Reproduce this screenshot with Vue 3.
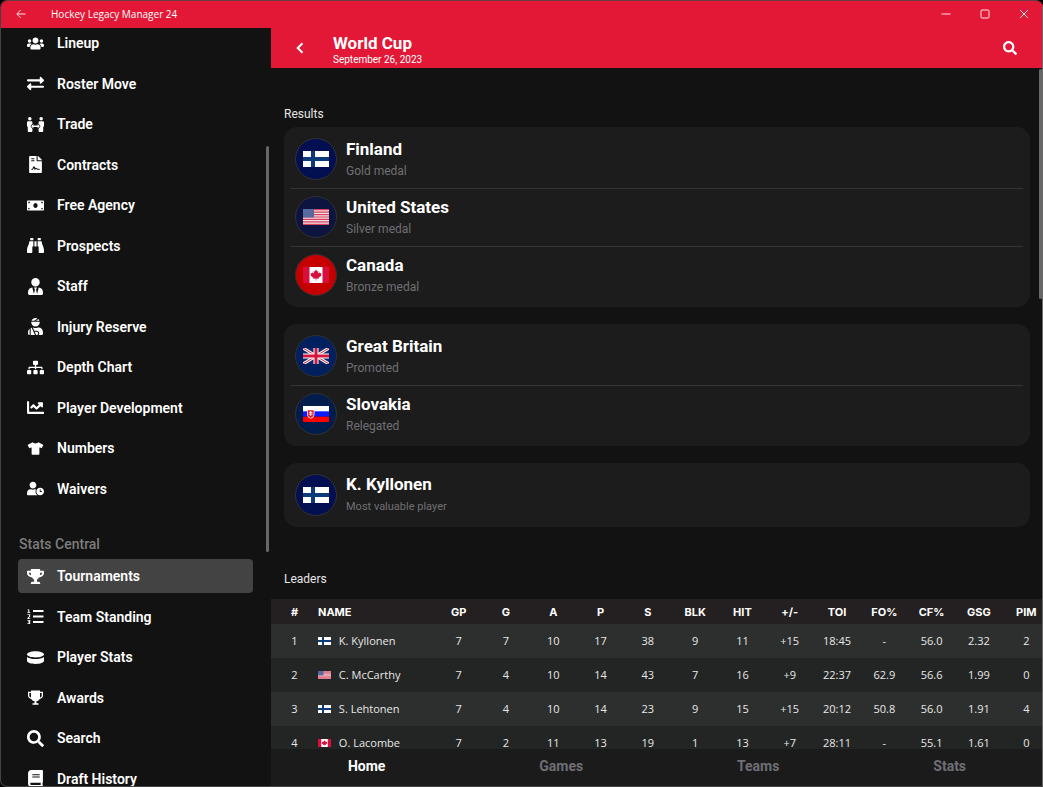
<script setup>
import { ref } from 'vue'

const icons = {
  lineup: {
    box: '0 0 640 512',
    path: 'M96 224c35.3 0 64-28.7 64-64s-28.7-64-64-64-64 28.7-64 64 28.7 64 64 64zm448 0c35.3 0 64-28.7 64-64s-28.7-64-64-64-64 28.7-64 64 28.7 64 64 64zm32 32h-64c-17.6 0-33.5 7.1-45.1 18.6 40.3 22.1 68.9 62 75.1 109.4h66c17.7 0 32-14.3 32-32v-32c0-35.3-28.7-64-64-64zm-256 0c61.9 0 112-50.1 112-112S381.9 32 320 32 208 82.1 208 144s50.1 112 112 112zm76.8 32h-8.3c-20.8 10-43.9 16-68.5 16s-47.6-6-68.5-16h-8.3C179.6 288 128 339.6 128 403.2V432c0 26.5 21.5 48 48 48h288c26.5 0 48-21.5 48-48v-28.8c0-63.6-51.6-115.2-115.2-115.2zm-223.7-13.4C161.5 263.1 145.6 256 128 256H64c-35.3 0-64 28.7-64 64v32c0 17.7 14.3 32 32 32h65.9c6.3-47.4 34.9-87.3 75.2-109.4z'
  },
  roster: {
    box: '0 0 512 512',
    path: 'M0 168v-16c0-13.255 10.745-24 24-24h360V80c0-21.367 25.899-32.042 40.971-16.971l80 80c9.372 9.373 9.372 24.569 0 33.941l-80 80C409.956 271.982 384 261.456 384 240v-48H24c-13.255 0-24-10.745-24-24zm488 152H128v-48c0-21.314-25.862-32.08-40.971-16.971l-80 80c-9.372 9.373-9.372 24.569 0 33.941l80 80C102.057 463.997 128 453.437 128 432v-48h360c13.255 0 24-10.745 24-24v-16c0-13.255-10.745-24-24-24z'
  },
  trade: {
    box: '0 0 576 512',
    path: 'M96 0a60 60 0 1 1 0 120a60 60 0 1 1 0-120zM480 0a60 60 0 1 1 0 120a60 60 0 1 1 0-120zM44 144h96c26 0 44 18 44 44v42l-52 58c-14 16-14 38 0 54l52 56v74c0 22-18 40-40 40H66c-22 0-40-18-40-40V344C10 336 0 320 0 302V188c0-26 18-44 44-44zM436 144h96c26 0 44 18 44 44v114c0 18-10 34-26 42v128c0 22-18 40-40 40h-78c-22 0-40-18-40-40v-74l52-56c14-16 14-38 0-54l-52-58v-42c0-26 18-44 44-44zM216 240v48h144v-48l76 75-76 75v-48H216v48l-76-75z'
  },
  contracts: {
    box: '0 0 384 512',
    path: 'M224 136V0H24C10.7 0 0 10.7 0 24v464c0 13.3 10.7 24 24 24h336c13.3 0 24-10.7 24-24V160H248c-13.2 0-24-10.8-24-24zM64 72c0-4.42 3.58-8 8-8h80c4.42 0 8 3.58 8 8v16c0 4.42-3.58 8-8 8H72c-4.42 0-8-3.58-8-8V72zm0 64c0-4.42 3.58-8 8-8h80c4.42 0 8 3.58 8 8v16c0 4.42-3.58 8-8 8H72c-4.42 0-8-3.58-8-8v-16zm192.81 248H304c8.84 0 16 7.16 16 16s-7.16 16-16 16h-47.19c-16.45 0-31.27-9.14-38.64-23.86-2.95-5.92-8.09-6.52-10.17-6.52s-7.22.59-10.02 6.19l-7.67 15.34a15.986 15.986 0 0 1-14.31 8.84c-.38 0-.75-.02-1.14-.05-6.45-.45-12-4.75-14.03-10.89L144 354.59l-10.61 31.88c-5.89 17.66-22.38 29.53-41 29.53H80c-8.84 0-16-7.16-16-16s7.16-16 16-16h12.39c4.83 0 9.11-3.08 10.64-7.66l18.19-54.64c3.3-9.81 12.44-16.41 22.78-16.41s19.48 6.59 22.77 16.41l13.88 41.64c19.77-16.19 54.05-9.7 66 14.16 2.02 4.06 5.96 6.5 10.16 6.5zM377 105L279.1 7c-4.5-4.5-10.6-7-17-7H256v128h128v-6.1c0-6.3-2.5-12.4-7-16.9z'
  },
  money: {
    box: '0 0 640 512',
    path: 'M608 64H32C14.33 64 0 78.33 0 96v320c0 17.67 14.33 32 32 32h576c17.67 0 32-14.33 32-32V96c0-17.67-14.33-32-32-32zM48 400v-64c35.35 0 64 28.65 64 64H48zm0-224v-64h64c0 35.35-28.65 64-64 64zm272 176c-44.19 0-80-42.99-80-96 0-53.02 35.82-96 80-96s80 42.98 80 96c0 53.03-35.83 96-80 96zm272 48h-64c0-35.35 28.65-64 64-64v64zm0-224c-35.35 0-64-28.65-64-64h64v64z'
  },
  binoculars: {
    box: '0 0 512 512',
    path: 'M416 48c0-8.84-7.16-16-16-16h-64c-8.84 0-16 7.16-16 16v48h96V48zM63.91 159.99C61.4 253.84 3.46 274.22 0 404v44c0 17.67 14.33 32 32 32h96c17.67 0 32-14.33 32-32V288h32V128H95.84c-17.63 0-31.45 14.37-31.93 31.99zm384.18 0c-.48-17.62-14.3-31.99-31.93-31.99H320v160h32v160c0 17.67 14.33 32 32 32h96c17.67 0 32-14.33 32-32v-44c-3.46-129.78-61.4-150.16-63.91-244.01zM176 32h-64c-8.84 0-16 7.16-16 16v48h96V48c0-8.84-7.16-16-16-16zm48 256h64V128h-64v160z'
  },
  staff: {
    box: '0 0 448 512',
    path: 'M224 256c70.7 0 128-57.3 128-128S294.7 0 224 0 96 57.3 96 128s57.3 128 128 128zm95.8 32.6L272 480l-32-136 32-56h-96l32 56-32 136-47.8-191.4C56.9 292 0 350.3 0 422.4V464c0 26.5 21.5 48 48 48h352c26.5 0 48-21.5 48-48v-41.6c0-72.1-56.9-130.4-128.2-133.8z'
  },
  injury: {
    box: '0 0 448 512',
    path: 'M277.37 11.98C261.08 4.47 243.11 0 224 0c-53.69 0-99.5 33.13-118.51 80h81.19l90.69-68.02zM342.51 80c-7.9-19.47-20.67-36.2-36.49-49.52L239.99 80h102.52zM224 256c70.69 0 128-57.31 128-128 0-5.48-.95-10.7-1.61-16H97.61c-.67 5.3-1.61 10.52-1.61 16 0 70.69 57.31 128 128 128zM80 299.7V512h128.26l-98.45-221.52A132.835 132.835 0 0 0 80 299.7zM0 464c0 26.51 21.49 48 48 48V320.24C18.88 344.89 0 381.26 0 422.4V464zm256-48h-55.38l42.67 96H256c26.47 0 48-21.53 48-48s-21.53-48-48-48zm57.6-128h-16.71c-22.24 10.18-46.88 16-72.89 16s-50.65-5.82-72.89-16h-7.37l42.67 96H256c44.11 0 80 35.89 80 80 0 18.08-6.26 34.59-16.41 48H400c26.51 0 48-21.49 48-48v-41.6c0-74.23-60.17-134.4-134.4-134.4z'
  },
  sitemap: {
    box: '0 0 640 512',
    path: 'M128 352H32c-17.67 0-32 14.33-32 32v96c0 17.67 14.33 32 32 32h96c17.67 0 32-14.33 32-32v-96c0-17.67-14.33-32-32-32zm-24-80h192v48h48v-48h192v48h48v-57.59c0-21.17-17.23-38.41-38.41-38.41H344v-64h40c17.67 0 32-14.33 32-32V32c0-17.67-14.33-32-32-32H256c-17.67 0-32 14.33-32 32v96c0 17.67 14.33 32 32 32h40v64H94.41C73.23 224 56 241.23 56 262.41V320h48v-48zm264 80h-96c-17.67 0-32 14.33-32 32v96c0 17.67 14.33 32 32 32h96c17.67 0 32-14.33 32-32v-96c0-17.67-14.33-32-32-32zm240 0h-96c-17.67 0-32 14.33-32 32v96c0 17.67 14.33 32 32 32h96c17.67 0 32-14.33 32-32v-96c0-17.67-14.33-32-32-32z'
  },
  chart: {
    box: '0 0 512 512',
    path: 'M496 384H64V80c0-8.84-7.16-16-16-16H16C7.16 64 0 71.16 0 80v336c0 17.67 14.33 32 32 32h464c8.84 0 16-7.16 16-16v-32c0-8.84-7.16-16-16-16zM464 96H345.94c-21.38 0-32.09 25.85-16.97 40.97l32.4 32.4L288 242.75l-73.37-73.37c-12.5-12.5-32.76-12.5-45.25 0l-68.69 68.69c-6.25 6.25-6.25 16.38 0 22.63l22.62 22.62c6.25 6.25 16.38 6.25 22.63 0L192 237.25l73.37 73.37c12.5 12.5 32.76 12.5 45.25 0l96-96 32.4 32.4c15.12 15.12 40.97 4.41 40.97-16.97V112c.01-8.84-7.15-16-15.99-16z'
  },
  shirt: {
    box: '-30 -20 700 552',
    path: 'M631.2 96.5L436.5 0C416.4 27.8 371.9 47.2 320 47.2S223.6 27.8 203.5 0L8.8 96.5c-7.9 4-11.1 13.6-7.2 21.5l57.2 114.5c4 7.9 13.6 11.1 21.5 7.2l56.6-27.7c10.6-5.2 23 2.5 23 14.4V480c0 17.7 14.3 32 32 32h256c17.7 0 32-14.3 32-32V226.3c0-11.8 12.4-19.6 23-14.4l56.6 27.7c7.9 4 17.5.8 21.5-7.2L638.3 118c4-7.9.8-17.6-7.1-21.5z'
  },
  waivers: {
    box: '0 0 640 512',
    path: 'M496 224c-79.6 0-144 64.4-144 144s64.4 144 144 144 144-64.4 144-144-64.4-144-144-144zm64 150.3c0 5.3-4.4 9.7-9.7 9.7h-60.6c-5.3 0-9.7-4.4-9.7-9.7v-76.6c0-5.3 4.4-9.7 9.7-9.7h12.6c5.3 0 9.7 4.4 9.7 9.7V352h38.3c5.3 0 9.7 4.4 9.7 9.7v12.6zM320 368c0-27.8 6.7-54.1 18.2-77.5-8-1.5-16.2-2.5-24.6-2.5h-16.7c-22.2 10.2-46.9 16-72.9 16s-50.6-5.8-72.9-16h-16.7C60.2 288 0 348.2 0 422.4V464c0 26.5 21.5 48 48 48h347.1c-45.3-31.9-75.1-84.5-75.1-144zm-96-112c70.7 0 128-57.3 128-128S294.7 0 224 0 96 57.3 96 128s57.3 128 128 128z'
  },
  trophy: {
    box: '0 0 576 512',
    path: 'M552 64H448V24c0-13.3-10.7-24-24-24H152c-13.3 0-24 10.7-24 24v40H24C10.7 64 0 74.7 0 88v56c0 35.7 22.5 72.4 61.9 100.7 31.5 22.7 69.8 37.1 110 41.7C203.3 338.5 240 360 240 360v72h-48c-35.3 0-64 20.7-64 56v12c0 6.6 5.4 12 12 12h296c6.6 0 12-5.4 12-12v-12c0-35.3-28.7-56-64-56h-48v-72s36.7-21.5 68.1-73.6c40.3-4.6 78.6-19 110-41.7 39.3-28.3 61.9-65 61.9-100.7V88c0-13.3-10.7-24-24-24zM99.3 192.8C74.9 175.2 64 155.6 64 144v-16h64.2c1 32.6 5.8 61.2 12.8 86.2-15.1-5.2-29.2-12.4-41.7-21.4zM512 144c0 16.1-17.7 36.1-35.3 48.8-12.5 9-26.7 16.2-41.8 21.4 7-25 11.8-53.6 12.8-86.2H512v16z'
  },
  standing: {
    box: '0 0 17 17',
    path: 'M6 2h10.500v2H6zM6 7.500h10.500v2H6zM6 13h10.500v2H6zM.5 1.500H2.300V4.300H3.300V5H.4V4.300H1.300V2.200H.5zM.4 6.300H3.200V8.600L1.600 10.200H3.300V11H.4V10L2.200 8.200V7.100H.4zM.4 12H3.200V16H.4V15.200H2.200V14.400H1V13.600H2.200V12.800H.4z'
  },
  puck: {
    box: '0 0 512 512',
    path: 'M0 160c0-53 114.600-96 256-96s256 43 256 96-114.600 96-256 96S0 213 0 160zm0 82.200V352c0 53 114.600 96 256 96s256-43 256-96V242.200c-113.400 82.300-398.500 82.400-512 0z'
  },
  awards: {
    box: '0 0 17 17',
    path: 'M4 1.500h9V2.700h3v3.800c0 2-1.400 3.200-3.300 3.400-.6 1.100-1.600 1.900-3.200 2.200v2.200h2v1.500H5.500v-1.500h2v-2.200c-1.600-.3-2.600-1.100-3.200-2.200C2.400 9.700 1 8.500 1 6.500V2.700h3zM4 4H2.300v2.500c0 1 .6 1.700 1.700 2zM13 4v4.500c1.100-.3 1.700-1 1.700-2V4z'
  },
  search: {
    box: '0 0 512 512',
    path: 'M505 442.700L405.300 343c-4.500-4.500-10.600-7-17-7H372c27.600-35.300 44-79.700 44-128C416 93.100 322.900 0 208 0S0 93.100 0 208s93.100 208 208 208c48.300 0 92.700-16.400 128-44v16.300c0 6.400 2.500 12.500 7 17l99.700 99.700c9.400 9.400 24.600 9.400 33.900 0l28.300-28.300c9.400-9.400 9.400-24.600.1-34zM208 336c-70.700 0-128-57.200-128-128 0-70.700 57.200-128 128-128 70.700 0 128 57.200 128 128 0 70.700-57.200 128-128 128z'
  },
  book: {
    box: '0 0 448 512',
    path: 'M448 360V24c0-13.300-10.700-24-24-24H96C43 0 0 43 0 96v320c0 53 43 96 96 96h328c13.300 0 24-10.700 24-24v-16c0-7.500-3.500-14.300-8.900-18.700-4.200-15.400-4.200-59.300 0-74.700 5.400-4.300 8.900-11.100 8.900-18.600zM128 134c0-3.300 2.700-6 6-6h212c3.300 0 6 2.700 6 6v20c0 3.300-2.700 6-6 6H134c-3.300 0-6-2.700-6-6v-20zm0 64c0-3.300 2.700-6 6-6h212c3.300 0 6 2.700 6 6v20c0 3.300-2.700 6-6 6H134c-3.300 0-6-2.700-6-6v-20zm253.400 250H96c-17.700 0-32-14.300-32-32 0-17.600 14.400-32 32-32h285.400c-1.900 17.100-1.900 46.900 0 64z'
  }
}

const teamMenu = [
  { label: 'Lineup', icon: 'lineup' },
  { label: 'Roster Move', icon: 'roster' },
  { label: 'Trade', icon: 'trade' },
  { label: 'Contracts', icon: 'contracts' },
  { label: 'Free Agency', icon: 'money' },
  { label: 'Prospects', icon: 'binoculars' },
  { label: 'Staff', icon: 'staff' },
  { label: 'Injury Reserve', icon: 'injury' },
  { label: 'Depth Chart', icon: 'sitemap' },
  { label: 'Player Development', icon: 'chart' },
  { label: 'Numbers', icon: 'shirt' },
  { label: 'Waivers', icon: 'waivers' }
]

const statsMenu = [
  { label: 'Tournaments', icon: 'trophy' },
  { label: 'Team Standing', icon: 'standing' },
  { label: 'Player Stats', icon: 'puck' },
  { label: 'Awards', icon: 'awards' },
  { label: 'Search', icon: 'search' },
  { label: 'Draft History', icon: 'book' }
]

const menus = [
  { title: '', items: teamMenu },
  { title: 'Stats Central', items: statsMenu }
]

const results = [
  [
    { name: 'Finland', note: 'Gold medal', flag: 'fi' },
    { name: 'United States', note: 'Silver medal', flag: 'us' },
    { name: 'Canada', note: 'Bronze medal', flag: 'ca' }
  ],
  [
    { name: 'Great Britain', note: 'Promoted', flag: 'gb' },
    { name: 'Slovakia', note: 'Relegated', flag: 'sk' }
  ],
  [
    { name: 'K. Kyllonen', note: 'Most valuable player', flag: 'fi', player: true }
  ]
]

const columns = ['GP', 'G', 'A', 'P', 'S', 'BLK', 'HIT', '+/-', 'TOI', 'FO%', 'CF%', 'GSG', 'PIM']

const leaders = [
  { name: 'K. Kyllonen', flag: 'fi', stats: ['7', '7', '10', '17', '38', '9', '11', '+15', '18:45', '-', '56.0', '2.32', '2'] },
  { name: 'C. McCarthy', flag: 'us', stats: ['7', '4', '10', '14', '43', '7', '16', '+9', '22:37', '62.9', '56.6', '1.99', '0'] },
  { name: 'S. Lehtonen', flag: 'fi', stats: ['7', '4', '10', '14', '23', '9', '15', '+15', '20:12', '50.8', '56.0', '1.91', '4'] },
  { name: 'O. Lacombe', flag: 'ca', stats: ['7', '2', '11', '13', '19', '1', '13', '+7', '28:11', '-', '55.1', '1.61', '0'] }
]

const tabs = ['Home', 'Games', 'Teams', 'Stats']

const activeItem = ref('Tournaments')
const activeTab = ref('Home')
</script>

<template>
  <div class="window">
    <svg class="sprite" aria-hidden="true">
      <symbol id="flag-fi" viewBox="0 0 26 16">
        <path fill="#fff" d="M0 0h26v16H0z" />
        <path fill="#0c3b7c" d="M8 0h4v16H8zM0 6h26v4H0z" />
      </symbol>
      <symbol id="flag-us" viewBox="0 0 26 16">
        <path fill="#f3dfe4" d="M0 0h26v16H0z" />
        <path
          v-for="n in 7"
          :key="n"
          fill="#d5405c"
          :d="`M0 ${(n - 1) * 2.46}h26v1.23H0z`"
        />
        <path fill="#566a9f" d="M0 0h11v8.600H0z" />
      </symbol>
      <symbol id="flag-ca" viewBox="0 0 26 16">
        <path fill="#d80f3c" d="M0 0h26v16H0z" />
        <path fill="#fff" d="M6.500 0h13v16h-13z" />
        <path fill="#d80f3c" d="M13 2.500l1.200 2 1.100-.5-.3 2.600 1.500-1.300.4.900 1.600-.2-.6 1.900.7.500-3 2.400.3 1-2.600-.3v2h-.6v-2l-2.600.3.3-1-3-2.400.7-.5-.6-1.900 1.600.2.400-.9L11 6.600 10.700 4l1.100.5z" />
      </symbol>
      <symbol id="flag-gb" viewBox="0 0 26 16">
        <path fill="#0b2a6b" d="M0 0h26v16H0z" />
        <path stroke="#fff" stroke-width="3" d="M0 0l26 16M26 0L0 16" />
        <path stroke="#d8143c" stroke-width="1" d="M0 0l26 16M26 0L0 16" />
        <path stroke="#fff" stroke-width="5" d="M13 0v16M0 8h26" />
        <path stroke="#d8143c" stroke-width="3" d="M13 0v16M0 8h26" />
      </symbol>
      <symbol id="flag-sk" viewBox="0 0 26 16">
        <path fill="#fff" d="M0 0h26v6H0z" />
        <path fill="#0d1bff" d="M0 5.300h26v5.400H0z" />
        <path fill="#f00" d="M0 10.700h26V16H0z" />
        <path fill="#fff" d="M4 3.500h7.500v4.500c0 2.300-1.500 3.800-3.700 4.800C5.500 11.800 4 10.300 4 8z" />
        <path fill="#f0141e" d="M4.700 4.200h6v4c0 1.800-1.200 3-3 3.800-1.800-.8-3-2-3-3.800z" />
        <path fill="#fff" d="M7.200 5h1v1.200h1.200v.8H8.200v.8h1.600v.8H8.200V10h-1V8.600H5.600v-.8h1.600V7H6v-.8h1.200z" />
      </symbol>
    </svg>

    <header class="titlebar">
      <button class="back-btn" aria-label="Back">
        <svg viewBox="0 0 10 10"><path d="M9.500 5H1M4.800 1L.8 5l4 4" /></svg>
      </button>
      <span class="app-title">Hockey Legacy Manager 24</span>
      <div class="window-controls">
        <button class="window-btn" aria-label="Minimize">
          <svg viewBox="0 0 10 10"><path d="M.5 5h9" /></svg>
        </button>
        <button class="window-btn" aria-label="Maximize">
          <svg viewBox="0 0 10 10"><rect x="1" y="1" width="8" height="8" rx="1" /></svg>
        </button>
        <button class="window-btn" aria-label="Close">
          <svg viewBox="0 0 10 10"><path d="M1 1l8 8M9 1L1 9" /></svg>
        </button>
      </div>
    </header>

    <div class="body">
      <nav class="sidebar">
        <div class="menu-scroll">
          <section v-for="menu in menus" :key="menu.title">
            <h2 v-if="menu.title" class="menu-title">{{ menu.title }}</h2>
            <ul class="menu" :class="{ 'menu-long': menu.items.length > 6 }">
              <li v-for="item in menu.items" :key="item.label">
                <button
                  class="menu-item"
                  :class="{ active: activeItem === item.label }"
                  @click="activeItem = item.label"
                >
                  <svg class="menu-icon" :viewBox="icons[item.icon].box">
                    <path fill-rule="evenodd" :d="icons[item.icon].path" />
                  </svg>
                  {{ item.label }}
                </button>
              </li>
            </ul>
          </section>
        </div>
        <div class="scrollbar menu-scrollbar"></div>
      </nav>

      <main class="main">
        <header class="page-header">
          <button class="icon-btn" aria-label="Previous page">
            <svg class="chevron" viewBox="0 0 8 12"><path d="M6.500 1.200L1.700 6l4.800 4.800" /></svg>
          </button>
          <div class="page-heading">
            <h1>World Cup</h1>
            <p>September 26, 2023</p>
          </div>
          <button class="icon-btn" aria-label="Find">
            <svg class="find-icon" :viewBox="icons.search.box"><path :d="icons.search.path" /></svg>
          </button>
        </header>

        <div class="content">
          <h2 class="section-title">Results</h2>
          <div class="cards">
            <ul v-for="(card, index) in results" :key="index" class="card">
              <li v-for="row in card" :key="row.name" class="result">
                <span class="badge" :class="'badge-' + row.flag">
                  <svg class="flag"><use :href="'#flag-' + row.flag" /></svg>
                </span>
                <div class="result-text" :class="{ player: row.player }">
                  <h3>{{ row.name }}</h3>
                  <p>{{ row.note }}</p>
                </div>
              </li>
            </ul>
          </div>

          <h2 class="section-title leaders-title">Leaders</h2>
          <table class="leaders">
            <colgroup>
              <col class="col-rank" />
              <col class="col-name" />
              <col v-for="column in columns" :key="column" />
            </colgroup>
            <thead>
              <tr>
                <th>#</th>
                <th class="name">NAME</th>
                <th v-for="column in columns" :key="column">{{ column }}</th>
              </tr>
            </thead>
            <tbody>
              <tr v-for="(player, index) in leaders" :key="player.name">
                <td>{{ index + 1 }}</td>
                <td class="name">
                  <svg class="flag-small"><use :href="'#flag-' + player.flag" /></svg>
                  {{ player.name }}
                </td>
                <td v-for="(value, i) in player.stats" :key="i">{{ value }}</td>
              </tr>
            </tbody>
          </table>
          <div class="scrollbar content-scrollbar"></div>
        </div>

        <nav class="tabs">
          <button
            v-for="tab in tabs"
            :key="tab"
            class="tab"
            :class="{ active: activeTab === tab }"
            @click="activeTab = tab"
          >
            {{ tab }}
          </button>
        </nav>
      </main>
    </div>
  </div>
</template>

<style>
body {
  background: #000;
}
</style>

<style scoped>
.window {
  position: relative;
  display: flex;
  flex-direction: column;
  height: 100vh;
  box-sizing: border-box;
  border: 1px solid #444;
  border-top-color: #6b3a43;
  border-right: none;
  border-radius: 7px 7px 0 7px;
  overflow: hidden;
  background: #121212;
  color: #fff;
  font-family: Roboto, "Liberation Sans", sans-serif;
}

/* right window edge, drawn over the content */
.window::after {
  content: "";
  position: absolute;
  top: 4px;
  right: 0;
  bottom: 0;
  width: 1px;
  background: #6a6a6a;
}

.sprite {
  position: absolute;
  width: 0;
  height: 0;
}

button {
  border: none;
  padding: 0;
  background: none;
  color: inherit;
  font: inherit;
  cursor: pointer;
}

h1,
h2,
h3,
p,
ul {
  margin: 0;
  padding: 0;
}

ul {
  list-style: none;
}

svg {
  display: block;
}

.titlebar {
  display: flex;
  align-items: center;
  flex: none;
  box-sizing: border-box;
  height: 27px;
  padding-bottom: 1px;
  background: #e31836;
}

.titlebar svg {
  width: 10px;
  height: 10px;
  margin: 0 auto;
  fill: none;
  stroke: #ffe3e8;
  stroke-width: 1;
}

.back-btn {
  width: 40px;
  height: 26px;
}

.app-title {
  padding-left: 10px;
  font-family: "Open Sans", "Noto Sans", sans-serif;
  font-size: 10px;
}

.window-controls {
  display: flex;
  margin-left: auto;
}

.window-btn {
  width: 39px;
  height: 26px;
}

.body {
  display: flex;
  flex: 1;
  min-height: 0;
}

.sidebar {
  position: relative;
  flex: none;
  width: 270px;
  overflow: hidden;
}

.menu-scroll {
  margin-top: -5px;
  padding: 0 18px 0 17px;
}

.menu {
  display: grid;
  grid-auto-rows: 1fr;
  min-height: 243px;
}

.menu-long {
  min-height: 486px;
}

.menu-title {
  padding: 23px 0 0 1px;
  color: #7d7d7d;
  font-size: 14px;
  font-weight: 500;
  line-height: 24px;
}

.menu-item {
  display: flex;
  align-items: center;
  gap: 13px;
  width: 100%;
  height: 34px;
  margin: 3px 0;
  padding: 0 9px;
  border-radius: 4px;
  font-size: 14px;
  font-weight: 600;
  text-align: left;
}

.menu-item.active {
  background: #434343;
}

.menu-icon {
  width: 17px;
  height: 17px;
  fill: #fff;
}

.scrollbar {
  position: absolute;
  width: 3px;
  border-radius: 2px;
  background: #67676a;
}

.menu-scrollbar {
  top: 118px;
  right: 2px;
  height: 406px;
}

.main {
  display: flex;
  flex: 1;
  flex-direction: column;
  min-width: 0;
}

.page-header {
  display: flex;
  align-items: center;
  flex: none;
  height: 40px;
  padding-right: 13px;
  background: #e31836;
}

.icon-btn {
  display: flex;
  align-items: center;
  justify-content: center;
  width: 40px;
  height: 40px;
}

.chevron {
  width: 8px;
  height: 12px;
  margin-left: 17px;
  fill: none;
  stroke: #fff;
  stroke-width: 2;
}

.find-icon {
  width: 14px;
  height: 14px;
  fill: #fff;
}

.page-heading {
  flex: 1;
  padding: 4px 0 0 22px;
}

.page-heading h1 {
  font-size: 17px;
  font-weight: 700;
  line-height: 18px;
}

.page-heading p {
  font-size: 10px;
  line-height: 15px;
}

.content {
  position: relative;
  flex: 1;
  min-height: 0;
  overflow: hidden;
}

.section-title {
  padding: 39px 13px 5px;
  color: #e6e6e6;
  font-size: 12px;
  font-weight: 400;
  line-height: 15px;
}

.leaders-title {
  padding-top: 45px;
  padding-bottom: 12px;
}

.cards {
  display: grid;
  gap: 17px;
  padding: 0 13px;
}

.card {
  padding: 3px 7px;
  border-radius: 13px;
  background: #1c1c1c;
}

.result {
  display: flex;
  align-items: center;
  gap: 9px;
  box-sizing: border-box;
  height: 58px;
  padding-left: 4px;
}

.result + .result {
  padding-bottom: 1px;
  border-top: 1px solid #343434;
}

.result-text {
  padding-top: 2px;
}

.result h3 {
  font-size: 17px;
  font-weight: 700;
  line-height: 22px;
}

.result p {
  color: #707074;
  font-size: 12px;
  line-height: 22px;
}

.result .player p {
  font-size: 11px;
  line-height: 24px;
}

.badge {
  display: flex;
  align-items: center;
  justify-content: center;
  box-sizing: border-box;
  width: 42px;
  height: 42px;
  border: 1px solid #313133;
  border-radius: 50%;
}

.badge-fi {
  background: #020f50;
}

.badge-us {
  background: #0d1440;
}

.badge-ca {
  background: #c60000;
}

.badge-gb {
  background: #002060;
}

.badge-sk {
  background: #021d4c;
}

.flag {
  width: 26px;
  height: 16px;
}

.leaders {
  width: calc(100% + 7px);
  table-layout: fixed;
  border-collapse: collapse;
  font-family: "Open Sans", "Noto Sans", sans-serif;
  font-size: 11px;
}

.col-rank {
  width: 47px;
}

.col-name {
  width: 117px;
}

.leaders th {
  height: 25px;
  padding: 0;
  background: #241f20;
  font-family: Inter, Roboto, sans-serif;
  font-size: 11px;
  font-weight: 700;
}

.leaders td {
  box-sizing: border-box;
  height: 34px;
  padding: 0 0 2px;
  background: #2d2f2e;
  color: #e8e8e8;
  text-align: center;
}

.leaders tr:nth-child(even) td {
  background: #232524;
}

.leaders .name {
  text-align: left;
}

.flag-small {
  display: inline-block;
  width: 13px;
  height: 8px;
  margin-right: 5px;
}

.content-scrollbar {
  top: 1px;
  right: 1px;
  height: 230px;
}

.tabs {
  display: flex;
  align-items: center;
  justify-content: space-around;
  flex: none;
  box-sizing: border-box;
  height: 37px;
  padding-bottom: 3px;
  background: #1b1b1b;
}

.tab {
  height: 34px;
  color: #6f6f75;
  font-size: 14px;
  font-weight: 700;
}

.tab.active {
  color: #fff;
}
</style>
